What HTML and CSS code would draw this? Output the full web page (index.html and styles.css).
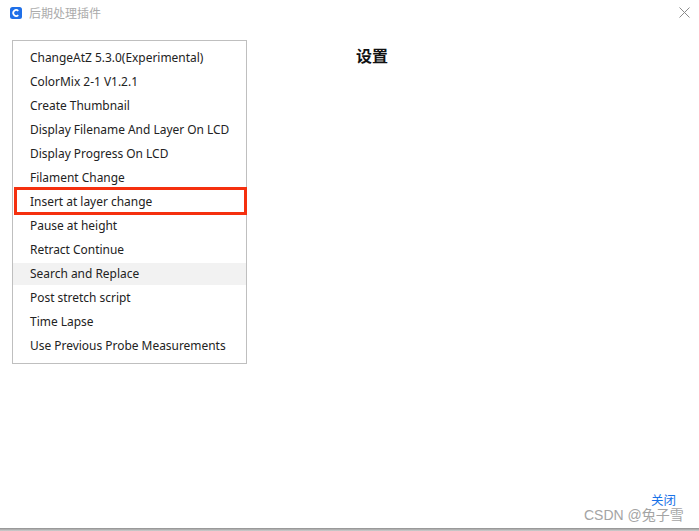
FILE: index.html
```html
<!DOCTYPE html>
<html lang="zh">
<head>
<meta charset="utf-8">
<title>后期处理插件</title>
<link rel="stylesheet" href="styles.css">
</head>
<body>
<div class="window">
  <header class="titlebar">
    <svg class="logo" width="12" height="12" viewBox="0 0 12 12" aria-hidden="true">
      <rect x="0" y="0" width="12" height="12" rx="2.5" fill="#1f6fe8"/>
      <path d="M8.3 3.8A3 3 0 1 0 8.3 8.2" fill="none" stroke="#fff" stroke-width="1.7"/>
    </svg>
    <span class="title">后期处理插件</span>
    <svg class="close-x" width="11" height="11" viewBox="0 0 11 11" aria-hidden="true">
      <path d="M0.5 0.5L10.5 10.5M10.5 0.5L0.5 10.5" stroke="#8a8a8a" stroke-width="1" fill="none"/>
    </svg>
  </header>
  <main class="content">
    <ul class="plugins">
      <li class="item">ChangeAtZ 5.3.0(Experimental)</li>
      <li class="item">ColorMix 2-1 V1.2.1</li>
      <li class="item">Create Thumbnail</li>
      <li class="item">Display Filename And Layer On LCD</li>
      <li class="item">Display Progress On LCD</li>
      <li class="item">Filament Change</li>
      <li class="item marked">Insert at layer change</li>
      <li class="item">Pause at height</li>
      <li class="item">Retract Continue</li>
      <li class="item hover">Search and Replace</li>
      <li class="item">Post stretch script</li>
      <li class="item">Time Lapse</li>
      <li class="item">Use Previous Probe Measurements</li>
    </ul>
    <h1 class="settings">设置</h1>
  </main>
  <footer class="footer"><a class="close-link">关闭</a></footer>
  <div class="edge"></div>
  <div class="watermark">CSDN @兔子雪</div>
</div>
</body>
</html>
```
FILE: styles.css
```css
* { box-sizing: border-box; }
html, body { margin: 0; padding: 0; }
body {
  width: 699px;
  height: 531px;
  overflow: hidden;
  background: #fff;
  font-family: "Noto Sans", "Noto Sans CJK SC", sans-serif;
}
.window {
  position: relative;
  width: 699px;
  height: 531px;
  display: flex;
  flex-direction: column;
}
.titlebar {
  height: 26px;
  padding: 7px 9px 0 10px;
  display: flex;
  align-items: flex-start;
  flex: none;
}
.logo { flex: none; }
.title {
  margin-left: 7px;
  margin-top: -1px;
  font-size: 12px;
  line-height: 14px;
  color: #ababab;
  font-family: "Noto Sans CJK SC", sans-serif;
}
.close-x { margin-left: auto; flex: none; }
.content {
  flex: 1;
  padding: 14px 0 0 12px;
  display: flex;
  align-items: flex-start;
}
.plugins {
  list-style: none;
  margin: 0;
  padding: 5px 0 5px;
  width: 235px;
  border: 1px solid #bfbfbf;
}
.item {
  position: relative;
  height: 24px;
  padding-left: 17px;
  font-size: 11.95px;
  line-height: 24px;
  color: #222;
  white-space: nowrap;
}
.marked::after {
  content: "";
  position: absolute;
  top: -3px;
  right: -1px;
  bottom: -1px;
  left: 1px;
  border: 3px solid #f5300f;
}
.hover {
  background: linear-gradient(#f2f2f2, #f2f2f2) 0 1px / 100% 22px no-repeat;
}
.settings {
  margin: 3px 0 0 109px;
  font-size: 16px;
  line-height: 24px;
  font-weight: 700;
  color: #111;
  font-family: "Noto Sans CJK SC", sans-serif;
}
.footer {
  flex: none;
  height: 35px;
  padding: 0 23px 0 0;
  display: flex;
  justify-content: flex-end;
}
.close-link {
  margin-top: -1px;
  font-size: 12.5px;
  line-height: 16px;
  height: 16px;
  color: #1a73e8;
  font-family: "Noto Sans CJK SC", sans-serif;
}
.edge {
  flex: none;
  height: 3px;
  background: linear-gradient(#8f8f8f, #d0d0d0);
}
.watermark {
  position: absolute;
  left: 584px;
  top: 506px;
  font-size: 14px;
  line-height: 18px;
  color: #a4a4a4;
  font-family: "Liberation Sans", "Noto Sans CJK SC", sans-serif;
  white-space: nowrap;
}
```
